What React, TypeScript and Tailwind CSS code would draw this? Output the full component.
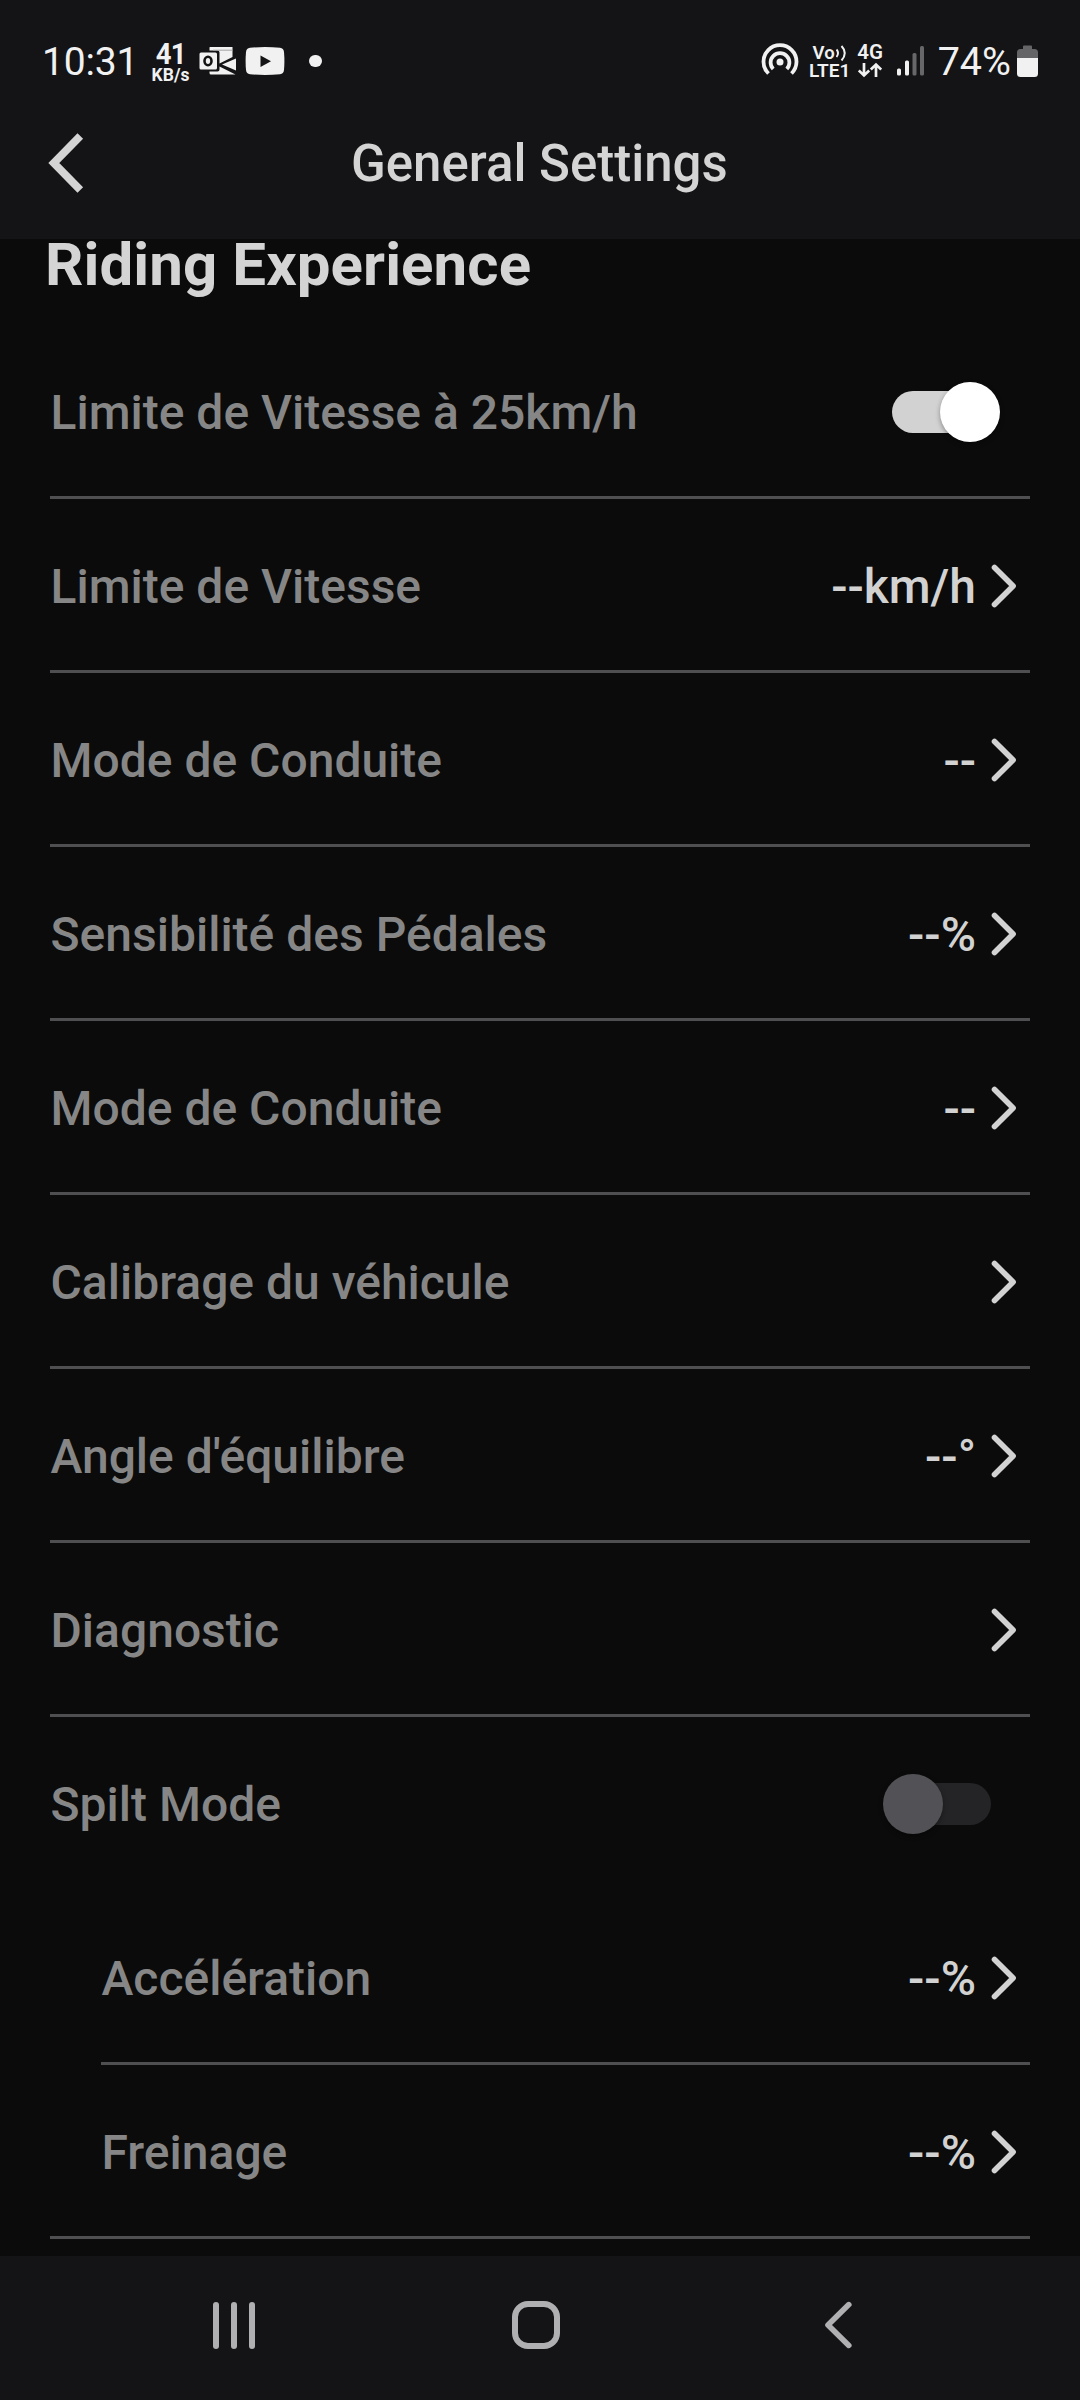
import React from "react";

type SettingRow = {
  label: string;
  value?: string;
  toggle?: "on" | "off";
  nested?: boolean;
  divider?: boolean;
};

const rows: SettingRow[] = [
  { label: "Limite de Vitesse à 25km/h", toggle: "on" },
  { label: "Limite de Vitesse", value: "--km/h" },
  { label: "Mode de Conduite", value: "--" },
  { label: "Sensibilité des Pédales", value: "--%" },
  { label: "Mode de Conduite", value: "--" },
  { label: "Calibrage du véhicule" },
  { label: "Angle d'équilibre", value: "--°" },
  { label: "Diagnostic" },
  { label: "Spilt Mode", toggle: "off", divider: false },
  { label: "Accélération", value: "--%", nested: true },
  { label: "Freinage", value: "--%", nested: true },
];

function OutlookIcon() {
  return (
    <svg className="ml-[9px] h-[30px] w-[38px]" viewBox="0 0 38 30">
      <path fill="#f1f1f1" d="M10.500 1.500Q10.500 1 11 1H33.500V11L20.500 17.500V6.500Q20.500 4.500 18.500 4.500H10.500z" />
      <path d="M14 4.200h19.500" stroke="#a5a5a7" strokeWidth="1" />
      <path fill="#f1f1f1" d="M37 12.500V24.500L23 18.500z" />
      <path fill="#f1f1f1" d="M10.500 25.500H18.500Q20.500 25.500 20.500 23.500V20.500L36.500 28.500H12Q10.500 28.500 10.500 27z" />
      <rect x="0.500" y="6.500" width="17.500" height="17" rx="1.500" fill="#f1f1f1" />
      <ellipse cx="9" cy="15" rx="3.500" ry="4.200" fill="none" stroke="#141416" strokeWidth="2.600" />
    </svg>
  );
}

function YoutubeIcon() {
  return (
    <svg className="ml-[8px] h-[30px] w-[40px]" viewBox="0 0 40 30">
      <path
        fill="#f1f1f1"
        d="M5 1.800Q20 .2 35 1.800Q38.600 2.200 39 6Q39.800 15 39 24Q38.600 27.800 35 28.200Q20 29.800 5 28.200Q1.400 27.800 1 24Q.2 15 1 6Q1.400 2.200 5 1.800Z"
      />
      <path fill="#141416" d="M15.500 9.500v11.500L26 15.300z" />
    </svg>
  );
}

function HotspotIcon() {
  return (
    <svg className="h-[38px] w-[38px]" viewBox="0 0 38 38" fill="none" stroke="#f1f1f1" strokeWidth="3.800">
      <path d="M7.500 31.500A16.500 16.500 0 1 1 30.500 31.500" />
      <path d="M12.200 27A9.400 9.400 0 1 1 25.800 27" />
      <circle cx="19" cy="20" r="3.500" fill="#f1f1f1" stroke="none" />
    </svg>
  );
}

function SignalIcon() {
  return (
    <svg className="ml-[13px] h-[30px] w-[28px]" viewBox="0 0 28 30">
      <rect x="0" y="22.500" width="4" height="7" rx="1.500" fill="#f1f1f1" />
      <rect x="8" y="14.500" width="4" height="15" rx="1.500" fill="#f1f1f1" />
      <rect x="15.500" y="7" width="4" height="22.500" rx="1.500" fill="#67676a" />
      <rect x="23" y="0" width="4" height="29.500" rx="1.500" fill="#67676a" />
    </svg>
  );
}

function BatteryIcon() {
  return (
    <svg className="ml-[6px] h-[32px] w-[21px]" viewBox="0 0 21 32">
      <path fill="#656567" d="M6 1.500Q6 .5 7 .5h7q1 0 1 1V4h2.500Q21 4 21 7.500V13H0V7.500Q0 4 3.500 4H6z" />
      <path fill="#f1f1f1" d="M0 13h21v15.500q0 3.500-3.500 3.500h-14Q0 32 0 28.500z" />
    </svg>
  );
}

function StatusBar() {
  return (
    <div className="flex h-[122px] items-center justify-between pl-[42px] pr-[42px] leading-none text-[#f1f1f1]">
      <div className="flex items-center">
        <span className="w-[109px] pt-[2px] text-[39px] tracking-[-0.2px]">10:31</span>
        <div className="flex w-[39px] flex-col items-center pt-[1px]">
          <span className="h-[24px] scale-x-95 text-[29px] font-bold leading-[24px] tracking-[-1px]">41</span>
          <span className="h-[16px] text-[17.5px] font-bold leading-[18px]">KB/s</span>
        </div>
        <OutlookIcon />
        <YoutubeIcon />
        <span className="ml-[24px] h-[12.5px] w-[12.5px] rounded-full bg-[#f1f1f1]" />
      </div>
      <div className="flex items-center">
        <HotspotIcon />
        <div className="ml-[12px] flex w-[38px] flex-col items-center font-semibold">
          <span className="flex h-[18px] items-center text-[18.5px] leading-[18px]">
            Vo
            <svg className="ml-[1px] h-[16px] w-[11px]" viewBox="0 0 11 16" fill="none" stroke="#f1f1f1" strokeWidth="2">
              <path d="M.5 4.500Q3.500 8 .5 12M5.500 1Q12 8 5.500 15.500" />
            </svg>
          </span>
          <span className="h-[17px] text-[19px] leading-[17px]">LTE1</span>
        </div>
        <div className="ml-[8px] flex w-[27px] flex-col items-center">
          <span className="h-[17px] text-[20.5px] font-semibold leading-[17px]">4G</span>
          <svg className="mt-[1px] h-[16px] w-[24px]" viewBox="0 0 24 16" fill="none" stroke="#f1f1f1" strokeWidth="2.700">
            <path d="M6 1v12M.8 8.500l5.200 5 5.200-5M18 15V3M12.800 7.500l5.200-5 5.200 5" />
          </svg>
        </div>
        <SignalIcon />
        <span className="ml-[13px] pt-[1px] text-[39.5px]">74%</span>
        <BatteryIcon />
      </div>
    </div>
  );
}

function Header() {
  return (
    <header className="h-[239px] shrink-0 bg-[#141416]">
      <StatusBar />
      <div className="flex h-[82px] items-center">
        <div className="flex w-[351px] items-center pl-[46px]">
          <svg className="h-[62px] w-[40px]" viewBox="0 0 40 62" fill="none" stroke="#d4d4d4" strokeWidth="7.800">
            <path d="M34.300 4 7.800 31l26.500 27" />
          </svg>
        </div>
        <h1 className="flex-1 text-[51px] font-medium leading-none text-[#d4d4d4]">General Settings</h1>
      </div>
    </header>
  );
}

function Toggle({ on }: { on: boolean }) {
  return on ? (
    <span className="mr-[29.5px] flex h-[60px] w-[108px] items-center">
      <span className="flex h-[42px] w-[102px] items-center rounded-full bg-[#d2d2d2] pl-[48px]">
        <span className="h-[60px] w-[60px] shrink-0 rounded-full bg-white shadow-[0_2px_5px_rgba(0,0,0,0.35)]" />
      </span>
    </span>
  ) : (
    <span className="mr-[38.5px] flex h-[60px] w-[108px] items-center justify-end">
      <span className="flex h-[42px] w-[102px] items-center rounded-full bg-[#242426]">
        <span className="-ml-[6px] h-[60px] w-[60px] shrink-0 rounded-full bg-[#525155] shadow-[0_2px_5px_rgba(0,0,0,0.35)]" />
      </span>
    </span>
  );
}

function ChevronRight() {
  return (
    <svg
      className="mr-[11.5px] h-[46px] w-[28px]"
      viewBox="0 0 28 46"
      fill="none"
      stroke="#d2d2d2"
      strokeWidth="5.600"
      strokeLinecap="round"
      strokeLinejoin="round"
    >
      <path d="M4.500 4.500 23.100 23 4.500 41.500" />
    </svg>
  );
}

function Row({ row, last }: { row: SettingRow; last: boolean }) {
  return (
    <li className={row.nested && !last ? "ml-[51px]" : ""}>
      <div className="flex h-[171px] items-center pt-[3px]">
        <span className={last ? "ml-[51.5px] flex-1 pt-[1px]" : "ml-[0.5px] flex-1 pt-[1px]"}>{row.label}</span>
        {row.toggle ? (
          <Toggle on={row.toggle === "on"} />
        ) : (
          <>
            <span className="mr-[14px] pt-[1px] text-[#d2d2d2]">{row.value}</span>
            <ChevronRight />
          </>
        )}
      </div>
      <div className={row.divider === false ? "h-[3px]" : "h-[3px] bg-[#4f4f52]"} />
    </li>
  );
}

function NavBar() {
  return (
    <nav className="flex h-[144px] shrink-0 items-center bg-[#141416] pb-[6px]">
      <div className="ml-[213px] flex h-[47px] w-[42px] justify-between">
        <span className="w-[6px] rounded-full bg-[#b0b0b2]" />
        <span className="w-[6px] rounded-full bg-[#b0b0b2]" />
        <span className="w-[6px] rounded-full bg-[#b0b0b2]" />
      </div>
      <span className="ml-[257px] h-[48px] w-[48px] rounded-[16px] border-[6px] border-[#b0b0b2]" />
      <svg
        className="ml-[263px] h-[50px] w-[32px]"
        viewBox="0 0 32 50"
        fill="none"
        stroke="#b0b0b2"
        strokeWidth="5.600"
        strokeLinecap="round"
        strokeLinejoin="round"
      >
        <path d="M25.800 4.600 5 25l20.800 20.400" />
      </svg>
    </nav>
  );
}

export default function App() {
  return (
    <div className="flex h-[2400px] w-[1080px] flex-col overflow-hidden bg-[#0b0b0b] font-['Roboto',sans-serif]">
      <Header />
      <main className="min-h-0 flex-1">
        <h2 className="mb-[34px] ml-[45px] h-[52px] text-[60px] font-bold leading-[52px] tracking-[0.08px] text-[#d4d4d4]">
          Riding Experience
        </h2>
        <ul className="pl-[50px] pr-[50.5px] text-[48px] font-medium leading-[56px] text-[#868686]">
          {rows.map((row, i) => (
            <Row key={i} row={row} last={i === rows.length - 1} />
          ))}
        </ul>
      </main>
      <NavBar />
    </div>
  );
}
